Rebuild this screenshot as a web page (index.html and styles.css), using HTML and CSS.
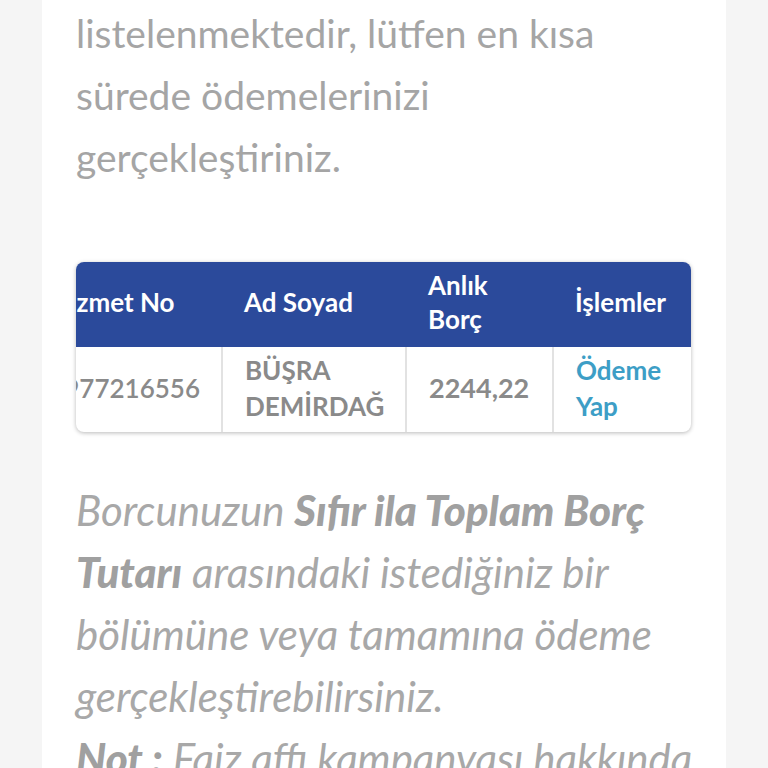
FILE: index.html
```html
<!DOCTYPE html>
<html lang="tr">
<head>
<meta charset="utf-8">
<link rel="stylesheet" href="styles.css">
</head>
<body>
<main class="card">
  <p class="intro">listelenmektedir, lütfen en kısa<br>sürede ödemelerinizi<br>gerçekleştiriniz.</p>
  <div class="table-wrap">
    <table class="debt">
      <thead>
        <tr>
          <th class="c1">Hizmet No</th>
          <th class="c2">Ad Soyad</th>
          <th class="c3">Anlık<br>Borç</th>
          <th class="c4">İşlemler</th>
        </tr>
      </thead>
      <tbody>
        <tr>
          <td class="c1 num">977216556</td>
          <td class="c2">BÜŞRA<br>DEMİRDAĞ</td>
          <td class="c3">2244,22</td>
          <td class="c4"><a class="pay" href="#">Ödeme<br>Yap</a></td>
        </tr>
      </tbody>
    </table>
  </div>
  <p class="note">Borcunuzun <b>Sıfır ila Toplam Borç</b><br><b>Tutarı</b> arasındaki istediğiniz bir<br>bölümüne veya tamamına ödeme<br>gerçekleştirebilirsiniz.<br><b>Not :</b> Faiz affı kampanyası hakkında</p>
</main>
</body>
</html>
```
FILE: styles.css
```css
html, body {
  margin: 0;
  padding: 0;
  background: #f5f5f5;
  height: 100%;
  overflow: hidden;
}
.card {
  width: 684px;
  margin-left: 42px;
  background: #ffffff;
  min-height: 768px;
  padding: 0 35px 0 34px;
  box-sizing: border-box;
}
.intro {
  margin: 0;
  padding-top: 2px;
  font-family: "Lato", "Noto Sans", sans-serif;
  font-size: 39px;
  line-height: 62px;
  color: #a5a5a5;
  white-space: nowrap;
}
.table-wrap {
  margin-top: 74px;
  width: 615px;
  border-radius: 8px;
  overflow: hidden;
  box-shadow: 0 1px 4px rgba(0,0,0,0.28);
}
.debt {
  border-collapse: collapse;
  table-layout: fixed;
  margin-left: -48px;
  width: 663px;
  font-family: "Lato", "Noto Sans", sans-serif;
}
.debt .c1 { width: 194px; }
.debt .c2 { width: 184px; }
.debt .c3 { width: 147px; }
.debt .c4 { width: 138px; }
.debt th {
  background: #2b4a9b;
  color: #ffffff;
  font-weight: 700;
  font-size: 26px;
  line-height: 34px;
  text-align: left;
  height: 85px;
  padding: 0 6px 5px 22px;
  box-sizing: border-box;
  white-space: nowrap;
}
.debt td {
  height: 85px;
  box-sizing: border-box;
  padding: 0 6px 4px 22px;
  font-size: 26px;
  line-height: 36px;
  font-weight: 700;
  color: #8a8a8a;
  border-left: 2px solid #e2e2e2;
  white-space: nowrap;
}
.debt td.c1 { border-left: none; text-align: right; padding-right: 21px; font-weight: 600; }
.debt td.c3 { font-size: 27px; }
.pay {
  color: #3d9ec6;
  text-decoration: none;
}
.note {
  margin: 47px 0 0;
  font-family: "Lato", "Noto Sans", sans-serif;
  font-style: italic;
  font-size: 42px;
  line-height: 62px;
  color: #a8a8a8;
  white-space: nowrap;
}
.note b {
  font-weight: 900;
  color: #a0a0a0;
}
```
